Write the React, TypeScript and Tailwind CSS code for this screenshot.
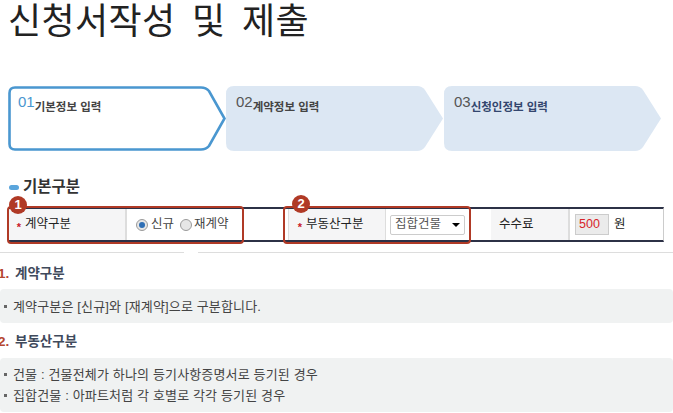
const KR = "font-['Liberation_Sans','Noto_Sans_CJK_KR',sans-serif]";

const STEPS = [
  { no: "01", label: "기본정보 입력", active: true },
  { no: "02", label: "계약정보 입력", active: false },
  { no: "03", label: "신청인정보 입력", active: false },
];

function Step({ no, label, active }: { no: string; label: string; active: boolean }) {
  return (
    <div className="relative h-[65px] w-[218px] shrink-0">
      <svg className="absolute inset-0" width="218" height="65" viewBox="0 0 218 65">
        {active ? (
          <path d="M7 1.5H193Q198 1.5 201 5L216.5 32.5L201 60Q198 63.5 193 63.5H7Q1.5 63.5 1.5 58V7Q1.5 1.5 7 1.5Z" fill="#fff" stroke="#4a97d0" strokeWidth="2.6" />
        ) : (
          <path d="M8 0H191Q196 0 199 4L217 32.5L199 61Q196 65 191 65H8Q0 65 0 57V8Q0 0 8 0Z" fill="#dce7f3" />
        )}
      </svg>
      <div className="relative flex items-start pl-[10px] pt-[7px]">
        <span className={`text-[15px] leading-[17px] ${active ? "text-[#4a97d0]" : "text-[#555]"}`}>{no}</span>
        <span className={`mt-[7px] text-[11.5px] leading-[14px] font-bold ${no === "03" ? "text-[#33466e]" : "text-[#444]"}`}>{label}</span>
      </div>
    </div>
  );
}

function Th({ children, width, star }: { children: string; width: string; star?: boolean }) {
  return (
    <div className={`flex h-full shrink-0 items-center bg-[#f5f5f6] pl-[8px] text-[12.5px] text-[#222] ${width}`}>
      {star && <span className="mt-[5px] mr-[3px] w-[6px] text-center text-[11px] leading-none font-bold text-[#c8202a]">*</span>}
      {children}
    </div>
  );
}

function Radio({ checked }: { checked?: boolean }) {
  return (
    <span className="flex h-[12px] w-[12px] items-center justify-center rounded-full border border-[#9a9a9a] bg-[#e6e6e6]">
      {checked && <span className="h-[6px] w-[6px] rounded-full bg-[#2f6fb5]" />}
    </span>
  );
}

function Marker({ n, className }: { n: string; className: string }) {
  return (
    <span className={`absolute flex h-[18px] w-[18px] items-center justify-center rounded-full bg-[#b03a26] text-[13px] font-bold text-white ${className}`}>
      {n}
    </span>
  );
}

function Heading({ n, title }: { n: string; title: string }) {
  return (
    <div className="flex h-[16px] items-center text-[13.5px] font-bold text-[#3f4a5c]">
      <span className="-ml-[8px] w-[17px] text-[#b5462f]">{n}.</span>
      <span>{title}</span>
    </div>
  );
}

function Note({ lines, className }: { lines: string[]; className: string }) {
  return (
    <div className={`flex flex-col justify-center gap-[4px] rounded-[4px] bg-[#f0f2f2] pl-[4px] text-[13px] leading-[17px] tracking-[0.15px] text-[#444] ${className}`}>
      {lines.map((l) => (
        <div key={l} className="flex items-center">
          <span className="mr-[6px] h-[3px] w-[3px] bg-[#666]" />
          {l}
        </div>
      ))}
    </div>
  );
}

export default function App() {
  return (
    <div className={`relative h-[413px] w-[673px] overflow-hidden bg-white ${KR}`}>
      <h1 className="pl-[8px] pt-[2px] text-[36px] leading-[40px] font-normal tracking-[0.4px] text-[#222] [word-spacing:6px]">신청서작성 및 제출</h1>

      <div className="mt-[44px] flex pl-[8px]">
        {STEPS.map((s) => (
          <Step key={s.no} {...s} />
        ))}
      </div>

      <div className="mt-[28px] flex h-[16px] items-center pl-[9px] text-[15.5px] font-bold text-[#333]">
        <span className="mr-[4px] h-[5px] w-[10px] rounded-full bg-[#5aa5dc]" />
        기본구분
      </div>

      <div className="relative mt-[12px] ml-[8px] flex h-[35px] w-[656px] items-center border-t-2 border-r border-b-2 border-t-[#2c3146] border-r-[#ccc] border-b-[#2c3146] text-[12.5px]">
        <Th width="w-[117px]" star>계약구분</Th>
        <div className="h-full w-[2px] bg-[#ddd]" />
        <div className="flex w-[161px] items-center pl-[9px] text-[#444]">
          <Radio checked />
          <span className="ml-[3px]">신규</span>
          <span className="ml-[6px]"><Radio /></span>
          <span className="ml-[2px]">재계약</span>
        </div>
        <div className="h-full w-px bg-[#ddd]" />
        <Th width="w-[96px]" star>부동산구분</Th>
        <div className="h-full w-px bg-[#ddd]" />
        <div className="w-[105px] pl-[4px]">
          <div className="flex h-[20px] w-[75px] items-center justify-between rounded-[2px] border border-[#ccc] pr-[4px] pl-[4px] text-[#555]">
            집합건물
            <span className="h-0 w-0 border-x-[4px] border-t-[4px] border-x-transparent border-t-black" />
          </div>
        </div>
        <Th width="w-[77px]">수수료</Th>
        <div className="h-full w-[2px] bg-[#ddd]" />
        <div className="flex items-center pl-[5px]">
          <span className="flex h-[21px] w-[34px] items-center border border-[#ccc] bg-[#ebebeb] pl-[3px] text-[#d8242a]">500</span>
          <span className="ml-[5px] text-[#222]">원</span>
        </div>
      </div>

      <div className="mt-[10px] flex">
        <div className="h-px w-[184px] bg-[#ddd]" />
        <div className="ml-[14px] h-px flex-1 bg-[#ddd]" />
      </div>

      <div className="mt-[13px] pl-[6px]"><Heading n="1" title="계약구분" /></div>
      <Note className="mt-[7px] h-[34px]" lines={["계약구분은 [신규]와 [재계약]으로 구분합니다."]} />
      <div className="mt-[11px] pl-[6px]"><Heading n="2" title="부동산구분" /></div>
      <Note className="mt-[8px] h-[54px]" lines={["건물 : 건물전체가 하나의 등기사항증명서로 등기된 경우", "집합건물 : 아파트처럼 각 호별로 각각 등기된 경우"]} />

      <div className="absolute top-[206px] left-[7px] h-[38px] w-[237px] rounded-[4px] border-[2.5px] border-[#b03a26]" />
      <div className="absolute top-[206px] left-[283px] h-[38px] w-[188px] rounded-[4px] border-[2.5px] border-[#b03a26]" />
      <Marker n="1" className="top-[196px] left-[9px]" />
      <Marker n="2" className="top-[195px] left-[292px]" />
    </div>
  );
}
